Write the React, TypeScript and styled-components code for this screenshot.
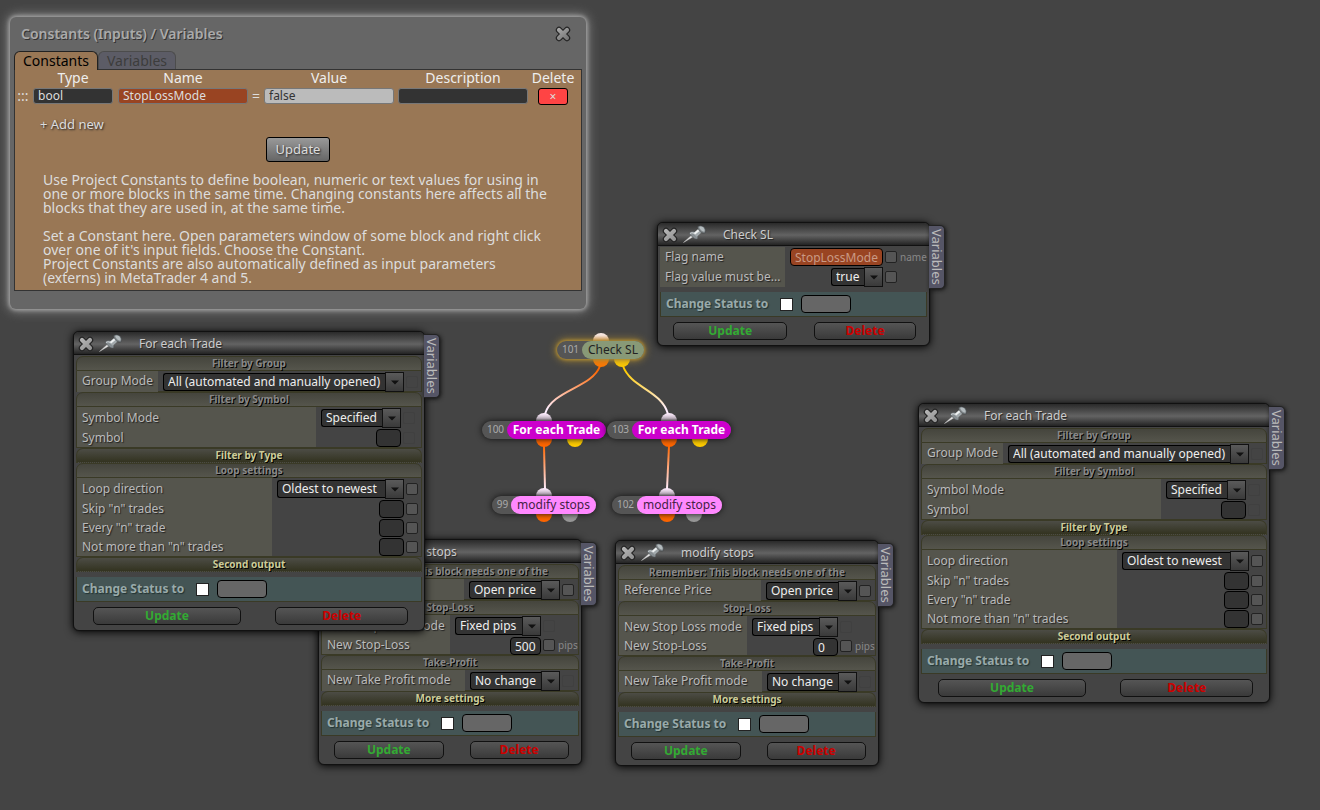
import React, { useId } from "react";
import styled, { createGlobalStyle, css } from "styled-components";

const GlobalStyle = createGlobalStyle`
  * { box-sizing: border-box; }
  html, body, #root { min-height: 100%; }
  body {
    margin: 0;
    background: #444;
    color: #bbb;
    font-family: "Noto Sans", "Open Sans", sans-serif;
    font-size: 12px;
    line-height: 16px;
  }
  button, input, select { font: inherit; color: inherit; margin: 0; }
`;

const Desktop = styled.main`
  position: relative;
  min-height: 100vh;
  overflow: hidden;
`;

/* ---------- icons ---------- */

const CrossIcon = ({ dim }: { dim?: boolean }) => {
  const id = useId();
  return (
    <svg width="16" height="16" viewBox="0 0 16 16" aria-hidden="true">
      <defs>
        <linearGradient id={id} gradientUnits="userSpaceOnUse" x1="3" y1="2" x2="12" y2="14">
          <stop offset="0" stopColor={dim ? "#aaa" : "#b8b8b8"} />
          <stop offset="1" stopColor={dim ? "#747474" : "#929292"} />
        </linearGradient>
      </defs>
      <g fill="none" strokeLinecap="round">
        <path d="M4 4 L12 12 M12 4 L4 12" stroke="#222" strokeWidth="6.4" />
        <path d="M4 4 L12 12 M12 4 L4 12" stroke={`url(#${id})`} strokeWidth="4.2" />
      </g>
    </svg>
  );
};

const PinIcon = () => (
  <svg width="24" height="18" viewBox="0 0 24 18" aria-hidden="true">
    <path d="M0.5 17.5 L9.2 9.8 L10.6 11.4 Z" fill="#eee" stroke="#bbb" strokeWidth="0.5" />
    <path d="M6.2 8.4 C7.8 6.4 10.4 6 12.4 7.2 C14.6 8.6 15.4 11.2 14.6 14 C12.8 14.4 11.2 13.6 9.8 12.2 C8.4 11 7 9.8 6.2 8.4 Z" fill="#878e92" stroke="#4c5052" strokeWidth="0.5" />
    <path d="M10.2 8.4 L16 3.2 L19.4 6.8 L13.8 11.8 Z" fill="#a2a9ac" />
    <path d="M10.8 8 L16.4 3.2 L18 4.8 L12.2 9.6 Z" fill="#eef1f2" />
    <path d="M14.8 1.4 C17 0 20 0.6 21.6 2.8 C23 4.8 22.8 6.6 21.8 8.2 C19.6 8.4 17.8 7.4 16.4 5.8 C15.2 4.4 14.4 3 14.8 1.4 Z" fill="#7a8184" stroke="#3c3f41" strokeWidth="0.5" />
    <path d="M16.4 1.8 C18.2 1 20 1.6 21 3.4 C21.8 4.8 21.8 5.8 21.2 6.8 C19.6 6.6 18.2 5.6 17.4 4.6 C16.6 3.6 16 2.8 16.4 1.8 Z" fill="#b4bbbe" />
    <path d="M7 8.4 C8.8 7.4 10.8 7.8 12 9" fill="none" stroke="#dfe3e5" strokeWidth="0.9" />
  </svg>
);

/* ---------- constants dialog ---------- */

const Dialog = styled.section`
  position: absolute;
  left: 10px;
  top: 17px;
  width: 576px;
  padding: 8px 4px 18px;
  background: #666;
  border-radius: 6px;
  box-shadow: 0 0 4px 1px #aaa, 0 0 12px 2px #888;
`;

const DialogBar = styled.header`
  display: flex;
  align-items: center;
  justify-content: space-between;
  height: 18px;
  margin-bottom: 8px;
  padding: 0 11px 0 7px;
`;

const DialogTitle = styled.h1`
  margin: 0;
  color: #aaa;
  font-size: 14px;
  line-height: 18px;
  font-weight: 600;
  text-shadow: 1px 1px 0 #333;
`;

const IconButton = styled.button`
  display: block;
  flex: none;
  height: 16px;
  padding: 0;
  border: 0;
  background: none;
  svg { display: block; }
`;

const TabList = styled.div`
  display: flex;
  height: 18px;
`;

const Tab = styled.button<{ $active?: boolean }>`
  position: relative;
  height: ${(p) => (p.$active ? 19 : 18)}px;
  padding: 0 8px;
  border: 1px solid ${(p) => (p.$active ? "#222" : "#4c4c4c")};
  border-bottom: 0;
  border-radius: 6px 6px 0 0;
  background: ${(p) => (p.$active ? "#975" : "#5c5c66")};
  color: ${(p) => (p.$active ? "#000" : "#3c3c3c")};
  font-size: 14px;
  line-height: 18px;
`;

const TabPanel = styled.div`
  padding-bottom: 5px;
  border: 1px solid #333;
  background: #975;
  color: #ddd;
`;

const ConstantsTable = styled.table`
  width: 562px;
  table-layout: fixed;
  border-collapse: collapse;
  th, td { padding: 0; text-align: center; }
  th {
    height: 17px;
    color: #eee;
    font-size: 14px;
    line-height: 16px;
    font-weight: 400;
    vertical-align: top;
  }
  td { height: 18px; font-size: 14px; vertical-align: middle; }
`;

const Cell = styled.input<{ $bg: string; $ink?: string; $wide?: boolean }>`
  display: block;
  width: ${(p) => (p.$wide ? 130 : 80)}px;
  height: 16px;
  margin: 0 auto;
  padding: 0 4px;
  border: 1px solid #777;
  border-radius: 3px;
  background: ${(p) => p.$bg};
  color: ${(p) => p.$ink ?? "#ddd"};
  font-size: 12px;
`;

const Grip = styled.span`
  display: block;
  line-height: 16px;
`;

const RemoveButton = styled.button`
  display: block;
  width: 30px;
  height: 17px;
  margin: 0 auto;
  padding: 0;
  border: 1px solid #000;
  border-radius: 3px;
  background: #f44;
  color: #ddd;
  font-size: 12px;
  line-height: 15px;
`;

const AddButton = styled.button`
  display: block;
  margin: 9px 0 3px 25px;
  padding: 0;
  border: 0;
  background: none;
  font-size: 13px;
  line-height: 20px;
  text-shadow: 1px 1px 2px #222;
`;

const SaveButton = styled.button`
  display: block;
  width: 64px;
  height: 25px;
  margin: 0 auto 11px;
  padding: 0 0 2px;
  border: 1px solid #000;
  border-radius: 3px;
  background: linear-gradient(#999, #666);
  font-size: 13px;
  text-shadow: 1px 1px 2px #222;
`;

const Help = styled.p`
  margin: 0 28px 14px;
  font-size: 14px;
  line-height: 14px;
  & + & { margin-bottom: 0; }
`;

const ConstantsDialog = () => (
  <Dialog>
    <DialogBar>
      <DialogTitle>Constants (Inputs) / Variables</DialogTitle>
      <IconButton aria-label="Close"><CrossIcon dim /></IconButton>
    </DialogBar>
    <TabList role="tablist">
      <Tab role="tab" aria-selected $active>Constants</Tab>
      <Tab role="tab">Variables</Tab>
    </TabList>
    <TabPanel>
      <ConstantsTable>
        <colgroup>
          <col style={{ width: 16 }} /><col style={{ width: 84 }} /><col style={{ width: 136 }} />
          <col style={{ width: 10 }} /><col style={{ width: 136 }} /><col style={{ width: 132 }} />
          <col style={{ width: 48 }} />
        </colgroup>
        <thead>
          <tr><th /><th>Type</th><th>Name</th><th /><th>Value</th><th>Description</th><th>Delete</th></tr>
        </thead>
        <tbody>
          <tr>
            <td><Grip>:::</Grip></td>
            <td><Cell aria-label="Type" defaultValue="bool" $bg="#333" /></td>
            <td><Cell aria-label="Name" defaultValue="StopLossMode" $bg="#942" $wide /></td>
            <td>=</td>
            <td><Cell aria-label="Value" defaultValue="false" $bg="#bbb" $ink="#333" $wide /></td>
            <td><Cell aria-label="Description" $bg="#333" $wide /></td>
            <td><RemoveButton aria-label="Delete constant">×</RemoveButton></td>
          </tr>
        </tbody>
      </ConstantsTable>
      <AddButton>+ Add new</AddButton>
      <SaveButton>Update</SaveButton>
      <Help>
        Use Project Constants to define boolean, numeric or text values for using in one or more
        blocks in the same time. Changing constants here affects all the blocks that they are used
        in, at the same time.
      </Help>
      <Help>
        Set a Constant here. Open parameters window of some block and right click over one of it's
        input fields. Choose the Constant.<br />
        Project Constants are also automatically defined as input parameters (externs) in
        MetaTrader 4 and 5.
      </Help>
    </TabPanel>
  </Dialog>
);

/* ---------- block windows ---------- */

const Frame = styled.section<{ $x: number; $y: number; $w: number }>`
  position: absolute;
  left: ${(p) => p.$x}px;
  top: ${(p) => p.$y}px;
  width: ${(p) => p.$w}px;
  border: 1px solid #111;
  border-radius: 6px;
  background: #444;
  box-shadow: 0 0 1px #111, 0 1px 8px #000;
`;

const TitleBar = styled.header`
  display: flex;
  align-items: center;
  height: 23px;
  padding: 2px 0 0 4px;
  border-bottom: 1px solid #111;
  border-radius: 5px 5px 0 0;
  background: linear-gradient(#2a2a2a, #636363 55%, #232323);
  & > svg { flex: none; margin: 0 16px 2px 5px; }
`;

const Title = styled.h2`
  margin: 0;
  color: #ccc;
  font-size: 12px;
  font-weight: 400;
  text-shadow: 1px 1px 1px #222;
`;

const SideTab = styled.button`
  position: absolute;
  left: 100%;
  top: 2px;
  width: 16px;
  height: 64px;
  padding: 0;
  border: 1px solid #222;
  border-left: 0;
  border-radius: 0 5px 5px 0;
  background: #556;
  box-shadow: 1px 1px 4px #111;
  color: #bbb;
  font-size: 13px;
  line-height: 14px;
  writing-mode: vertical-rl;
`;

const Body = styled.div`
  padding: 1px 2px 5px;
`;

const SectionHead = styled.button<{ $open?: boolean }>`
  display: block;
  width: 100%;
  height: 15px;
  padding: 0;
  border: 1px solid #3a3a26;
  border-radius: 7px 7px 0 0;
  font-size: 10px;
  line-height: 13px;
  font-weight: 700;
  text-shadow: 1px 1px 0 #000;
  ${(p) =>
    p.$open
      ? css`
          background: linear-gradient(#45453d, #55554c);
          color: #888;
        `
      : css`
          border-bottom-style: dotted;
          background: linear-gradient(#4c4c45, #333320);
          color: #cc9;
        `}
`;

const RowLabel = styled.label`
  flex: 1;
  padding-left: 5px;
  background: #55554d;
  color: #bbb;
  line-height: 20px;
  white-space: nowrap;
  text-shadow: 1px 1px 1px #222;
`;

const rowHeights = { tall: 21, normal: 19, snug: 18 };

const Row = styled.div<{ $size: keyof typeof rowHeights }>`
  display: flex;
  align-items: stretch;
  height: ${(p) => rowHeights[p.$size]}px;
  ${RowLabel} { line-height: ${(p) => (p.$size === "snug" ? 18 : 20)}px; }
  &:not(:only-child) ${RowLabel} { ${(p) => p.$size === "tall" && "line-height: 22px;"} }
`;

/* A drop-down that ends a framed group covers the group's bottom edge. */
const Fields = styled.div<{ $bare?: boolean }>`
  ${(p) =>
    !p.$bare &&
    css`
      border: solid #3a3a26;
      border-width: 0 1px 1px;
      ${Row}:only-child { margin-bottom: -1px; }
    `}
`;

const Value = styled.div<{ $w: number }>`
  display: flex;
  flex: none;
  justify-content: flex-end;
  width: ${(p) => p.$w}px;
  padding: 1px 0 0 5px;
`;

const Tail = styled.div<{ $w: number }>`
  display: flex;
  flex: none;
  align-items: center;
  gap: 3px;
  width: ${(p) => p.$w}px;
  padding-left: 2px;
  color: #888;
  font-size: 10px;
`;

const Picker = styled.div<{ $w?: number }>`
  position: relative;
  display: flex;
  align-items: center;
  width: ${(p) => (p.$w ? `${p.$w}px` : "100%")};
  height: 20px;
`;

const Select = styled.select`
  flex: 1;
  min-width: 0;
  height: 18px;
  padding: 0 0 0 4px;
  border: 1px solid #000;
  border-right: 0;
  border-radius: 3px 0 0 3px;
  background: #333;
  color: #eee;
  line-height: 16px;
  appearance: none;
`;

const Arrow = styled.span`
  display: flex;
  flex: none;
  align-items: center;
  justify-content: center;
  width: 19px;
  height: 20px;
  border: 1px solid #111;
  background: linear-gradient(#5a5a5a, #3a3a3a);
  pointer-events: none;
`;

const TextBox = styled.input<{ $w: number; $bg?: string; $ink?: string }>`
  width: ${(p) => p.$w}px;
  height: 18px;
  padding: 0 4px;
  border: 1px solid #000;
  border-radius: 4px;
  background: ${(p) => p.$bg ?? "#333"};
  color: ${(p) => p.$ink ?? "#eee"};
`;

const Tick = styled.input<{ $faint?: boolean }>`
  flex: none;
  width: 12px;
  height: 12px;
  border: 1px solid ${(p) => (p.$faint ? "#404040" : "#222")};
  border-radius: 2px;
  background: ${(p) => (p.$faint ? "#444" : "#555")};
  appearance: none;
`;

const Status = styled.div`
  display: flex;
  align-items: center;
  height: 25px;
  margin: 5px 0;
  padding-left: 5px;
  border: solid #3a3a26;
  border-width: 0 1px 1px;
  background: #455;
`;

const StatusLabel = styled.label`
  width: 114px;
  color: #9aa;
  font-weight: 700;
  text-shadow: 1px 1px 1px #233;
`;

const StatusTick = styled.input`
  width: 13px;
  height: 13px;
  margin-right: 8px;
  border: 1px solid #222;
  background: #fff;
  appearance: none;
`;

const Actions = styled.div`
  display: flex;
  gap: 11%;
  padding: 0 4% 0 5%;
`;

const Action = styled.button<{ $ink: string; $grow: number }>`
  flex: ${(p) => p.$grow} 1 0;
  min-width: 0;
  height: 18px;
  padding: 0;
  border: 1px solid #111;
  border-radius: 5px;
  background: linear-gradient(#555, #3a3a3a);
  color: ${(p) => p.$ink};
  font-weight: 700;
  line-height: 16px;
`;

type Field = {
  label: string;
  select?: string;
  text?: string;
  width?: number;
  bg?: string;
  ink?: string;
  faint?: boolean;
  unit?: string;
  snug?: boolean;
};
type Section = { head?: string; value?: number; tail?: number; fields?: Field[] };
type BlockProps = { x: number; y: number; w: number; title: string; sections: Section[] };

const FieldRow = ({ field, value, tail }: { field: Field; value: number; tail: number }) => {
  const id = useId();
  return (
    <Row $size={field.select ? "tall" : field.snug ? "snug" : "normal"}>
      <RowLabel htmlFor={id}>{field.label}</RowLabel>
      <Value $w={value}>
        {field.select ? (
          <Picker $w={field.width}>
            <Select id={id}><option>{field.select}</option></Select>
            <Arrow>
              <svg width="8" height="5" viewBox="0 0 8 5" aria-hidden="true">
                <path d="M0 0.5 H8 L4 4.5 Z" fill="#111" />
              </svg>
            </Arrow>
          </Picker>
        ) : (
          <TextBox id={id} $w={field.width ?? 25} $bg={field.bg} $ink={field.ink} defaultValue={field.text} />
        )}
      </Value>
      <Tail $w={tail}>
        <Tick type="checkbox" aria-label={`${field.label} option`} $faint={field.faint} />
        {field.unit}
      </Tail>
    </Row>
  );
};

const BlockWindow = ({ x, y, w, title, sections }: BlockProps) => {
  const id = useId();
  return (
    <Frame $x={x} $y={y} $w={w}>
      <TitleBar>
        <IconButton aria-label="Close"><CrossIcon /></IconButton>
        <PinIcon />
        <Title>{title}</Title>
      </TitleBar>
      <SideTab>Variables</SideTab>
      <Body>
        {sections.map((s, i) => (
          <React.Fragment key={i}>
            {s.head && <SectionHead $open={!!s.fields}>{s.head}</SectionHead>}
            {s.fields && (
              <Fields $bare={!s.head}>
                {s.fields.map((f) => (
                  <FieldRow key={f.label} field={f} value={s.value ?? 0} tail={s.tail ?? 0} />
                ))}
              </Fields>
            )}
          </React.Fragment>
        ))}
        <Status>
          <StatusLabel htmlFor={id}>Change Status to</StatusLabel>
          <StatusTick id={id} type="checkbox" />
          <TextBox aria-label="Status" $w={50} $bg="#666" />
        </Status>
        <Actions>
          <Action $ink="#3a3" $grow={10}>Update</Action>
          <Action $ink="#c00" $grow={9}>Delete</Action>
        </Actions>
      </Body>
    </Frame>
  );
};

const checkSections: Section[] = [
  {
    value: 98,
    tail: 44,
    fields: [
      { label: "Flag name", text: "StopLossMode", width: 93, bg: "#942", ink: "#c99a85", unit: "name" },
      { label: "Flag value must be...", select: "true", width: 52 },
    ],
  },
];

const forEachSections: Section[] = [
  {
    head: "Filter by Group", value: 246, tail: 17,
    fields: [{ label: "Group Mode", select: "All (automated and manually opened)", faint: true }],
  },
  {
    head: "Filter by Symbol", value: 85, tail: 20,
    fields: [
      { label: "Symbol Mode", select: "Specified", faint: true },
      { label: "Symbol", faint: true },
    ],
  },
  { head: "Filter by Type" },
  {
    head: "Loop settings", value: 132, tail: 17,
    fields: [
      { label: "Loop direction", select: "Oldest to newest" },
      { label: 'Skip "n" trades' },
      { label: 'Every "n" trade' },
      { label: 'Not more than "n" trades' },
    ],
  },
  { head: "Second output" },
];

const modifySections = (stopLoss: string, width: number): Section[] => [
  {
    head: "Remember: This block needs one of the", value: 96, tail: 18,
    fields: [{ label: "Reference Price", select: "Open price" }],
  },
  {
    head: "Stop-Loss", value: 91, tail: 37,
    fields: [
      { label: "New Stop Loss mode", select: "Fixed pips", faint: true },
      { label: "New Stop-Loss", text: stopLoss, width, unit: "pips", snug: true },
    ],
  },
  {
    head: "Take-Profit", value: 95, tail: 18,
    fields: [{ label: "New Take Profit mode", select: "No change", faint: true }],
  },
  { head: "More settings" },
];

/* ---------- block diagram ---------- */

const Wires = styled.svg`
  position: absolute;
  left: 0;
  top: 0;
  pointer-events: none;
`;

const NodePill = styled.div<{ $x: number; $y: number; $w: number; $glow?: boolean }>`
  position: absolute;
  left: ${(p) => p.$x}px;
  top: ${(p) => p.$y}px;
  display: flex;
  width: ${(p) => p.$w}px;
  height: 18px;
  border-radius: 9px;
  background: #555;
  box-shadow: ${(p) => (p.$glow ? "0 0 3px 1px #a83, 0 0 9px 1px #a83" : "0 0 6px #111")};
`;

const NodeId = styled.span`
  flex: 1;
  padding-left: 2px;
  color: #aaa;
  font-size: 10px;
  line-height: 17px;
  text-align: center;
`;

const NodeName = styled.span<{ $w: number; $bg: string; $ink: string; $bold?: boolean }>`
  width: ${(p) => p.$w}px;
  border-radius: 9px;
  background: ${(p) => p.$bg};
  color: ${(p) => p.$ink};
  font-weight: ${(p) => (p.$bold ? 700 : 400)};
  line-height: 18px;
  text-align: center;
  white-space: nowrap;
`;

const nodes = [
  { id: 101, name: "Check SL", x: 557, y: 341, w: 87, nameW: 62, bg: "#897", ink: "#222", input: 601, out: 601, alt: 622, altFill: "#fc0", glow: true },
  { id: 100, name: "For each Trade", x: 482, y: 421, w: 124, nameW: 99, bg: "#c0c", ink: "#fff", input: 544, out: 544, alt: 575, altFill: "#fc0", bold: true },
  { id: 103, name: "For each Trade", x: 607, y: 421, w: 124, nameW: 99, bg: "#c0c", ink: "#fff", input: 669, out: 669, alt: 700, altFill: "#fc0", bold: true },
  { id: 99, name: "modify stops", x: 492, y: 496, w: 104, nameW: 85, bg: "#f8f", ink: "#424", input: 544, out: 544, alt: 570, altFill: "#999" },
  { id: 102, name: "modify stops", x: 612, y: 496, w: 110, nameW: 85, bg: "#f8f", ink: "#424", input: 667, out: 667, alt: 694, altFill: "#999" },
];

const Diagram = () => (
  <>
    <Wires width="760" height="540" viewBox="0 0 760 540" aria-hidden="true">
      <defs>
        <linearGradient id="w1" gradientUnits="userSpaceOnUse" x1="0" y1="366" x2="0" y2="414">
          <stop offset="0.1" stopColor="#f60" /><stop offset="0.9" stopColor="#fef" />
        </linearGradient>
        <linearGradient id="w2" gradientUnits="userSpaceOnUse" x1="0" y1="366" x2="0" y2="414">
          <stop offset="0.1" stopColor="#fc0" /><stop offset="0.9" stopColor="#fef" />
        </linearGradient>
        <linearGradient id="w3" gradientUnits="userSpaceOnUse" x1="0" y1="446" x2="0" y2="489">
          <stop offset="0" stopColor="#f60" /><stop offset="1" stopColor="#fef" />
        </linearGradient>
        <linearGradient id="pIn" x1="0" y1="0" x2="0" y2="1">
          <stop offset="0" stopColor="#fef" /><stop offset="0.35" stopColor="#dcd" /><stop offset="0.5" stopColor="#998f99" />
        </linearGradient>
        <linearGradient id="pGlow" x1="0" y1="0" x2="0" y2="1">
          <stop offset="0.15" stopColor="#fef0f0" /><stop offset="0.5" stopColor="#fcb890" />
        </linearGradient>
      </defs>
      <g fill="none" strokeWidth="2">
        <path d="M600 366 C592 388 552 390 545 414" stroke="url(#w1)" />
        <path d="M623 366 C631 388 661 390 668 414" stroke="url(#w2)" />
        <path d="M544 446 L545 489" stroke="url(#w3)" />
        <path d="M669 446 L667 489" stroke="url(#w3)" />
      </g>
      {nodes.map((n) => (
        <g key={n.id}>
          <circle cx={n.input} cy={n.y} r="8" fill={n.glow ? "url(#pGlow)" : "url(#pIn)"} />
          <circle cx={n.out} cy={n.y + 18} r="8" fill={n.glow ? "#f70" : "#f60"} />
          <circle cx={n.alt} cy={n.y + 18} r="8" fill={n.altFill} />
        </g>
      ))}
    </Wires>
    {nodes.map((n) => (
      <NodePill key={n.id} $x={n.x} $y={n.y} $w={n.w} $glow={n.glow}>
        <NodeId>{n.id}</NodeId>
        <NodeName $w={n.nameW} $bg={n.bg} $ink={n.ink} $bold={n.bold}>{n.name}</NodeName>
      </NodePill>
    ))}
  </>
);

export default function App() {
  return (
    <>
      <GlobalStyle />
      <Desktop>
        <Diagram />
        <BlockWindow x={318} y={539} w={264} title="modify stops" sections={modifySections("500", 31)} />
        <BlockWindow x={615} y={540} w={264} title="modify stops" sections={modifySections("0", 25)} />
        <BlockWindow x={657} y={222} w={273} title="Check SL" sections={checkSections} />
        <BlockWindow x={73} y={331} w={352} title="For each Trade" sections={forEachSections} />
        <BlockWindow x={918} y={403} w={352} title="For each Trade" sections={forEachSections} />
        <ConstantsDialog />
      </Desktop>
    </>
  );
}
